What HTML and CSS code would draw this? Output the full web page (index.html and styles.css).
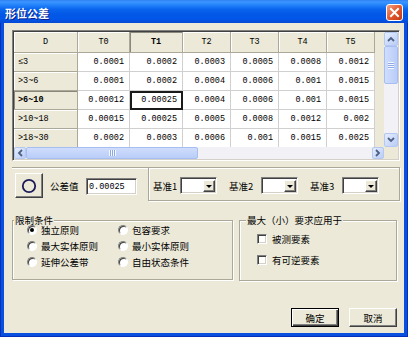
FILE: index.html
```html
<!DOCTYPE html>
<html lang="zh-CN">
<head>
<meta charset="utf-8">
<title>形位公差</title>
<link rel="stylesheet" href="styles.css">
</head>
<body>
<div class="window">
  <div class="titlebar">
    <span class="title">形位公差</span>
    <span class="close"><svg width="15" height="15" viewBox="0 0 15 15"><path d="M4 4 L11 11 M11 4 L4 11" stroke="#fff" stroke-width="2" stroke-linecap="square"/></svg></span>
  </div>
  <div class="client">
    <div class="flexgrid">
      <div class="cells">
        <div class="hd">D</div><div class="hd">T0</div><div class="hd cur">T1</div><div class="hd">T2</div><div class="hd">T3</div><div class="hd">T4</div><div class="hd">T5</div>

        <div class="rh">≤3</div><div class="v">0.0001</div><div class="v">0.0002</div><div class="v">0.0003</div><div class="v">0.0005</div><div class="v">0.0008</div><div class="v">0.0012</div>

        <div class="rh">&gt;3~6</div><div class="v">0.0001</div><div class="v">0.0002</div><div class="v">0.0004</div><div class="v">0.0006</div><div class="v">0.001</div><div class="v">0.0015</div>

        <div class="rh cur">&gt;6~10</div><div class="v">0.00012</div><div class="v sel">0.00025</div><div class="v">0.0004</div><div class="v">0.0006</div><div class="v">0.001</div><div class="v">0.0015</div>

        <div class="rh">&gt;10~18</div><div class="v">0.00015</div><div class="v">0.00025</div><div class="v">0.0005</div><div class="v">0.0008</div><div class="v">0.0012</div><div class="v">0.002</div>

        <div class="rh last">&gt;18~30</div><div class="v last">0.0002</div><div class="v last">0.0003</div><div class="v last">0.0006</div><div class="v last">0.001</div><div class="v last">0.0015</div><div class="v last">0.0025</div>
      </div>
      <div class="filler"></div>
      <div class="vscroll">
        <div class="sbtn"><svg width="8" height="6" viewBox="0 0 8 6"><polyline points="1,5 4,2 7,5" fill="none" stroke="#4D6185" stroke-width="1.8"/></svg></div>
        <div class="vtrack"><div class="vthumb"><div class="vgrip"></div></div></div>
        <div class="sbtn"><svg width="8" height="6" viewBox="0 0 8 6"><polyline points="1,1 4,4 7,1" fill="none" stroke="#4D6185" stroke-width="1.8"/></svg></div>
      </div>
      <div class="hscroll">
        <div class="sbtn hbtn"><svg width="6" height="8" viewBox="0 0 6 8"><polyline points="5,1 2,4 5,7" fill="none" stroke="#4D6185" stroke-width="1.8"/></svg></div>
        <div class="htrack"><div class="hthumb"><div class="hgrip"></div></div></div>
        <div class="sbtn hbtn"><svg width="6" height="8" viewBox="0 0 6 8"><polyline points="1,1 4,4 1,7" fill="none" stroke="#4D6185" stroke-width="1.8"/></svg></div>
      </div>
      <div class="corner"></div>
    </div>

    <div class="midrow">
      <div class="leftpart">
        <div class="circbtn"><svg width="16" height="16" viewBox="0 0 16 16"><circle cx="8" cy="8" r="6.2" fill="none" stroke="#1B1B58" stroke-width="1.8"/></svg></div>
        <span class="lbl">公差值</span>
        <div class="edit">0.00025</div>
      </div>
      <div class="panel">
        <span class="blabel first">基准1</span>
        <div class="combo"><span class="ddbtn"><span class="tri"></span></span></div>
        <span class="blabel">基准2</span>
        <div class="combo"><span class="ddbtn"><span class="tri"></span></span></div>
        <span class="blabel">基准3</span>
        <div class="combo"><span class="ddbtn"><span class="tri"></span></span></div>
      </div>
    </div>

    <div class="groups">
      <div class="group g1">
        <div class="gtitle">限制条件</div>
        <div class="radios">
          <div class="opt"><span class="radio on"></span><span>独立原则</span></div>
          <div class="opt"><span class="radio"></span><span>包容要求</span></div>
          <div class="opt"><span class="radio"></span><span>最大实体原则</span></div>
          <div class="opt"><span class="radio"></span><span>最小实体原则</span></div>
          <div class="opt"><span class="radio"></span><span>延伸公差带</span></div>
          <div class="opt"><span class="radio"></span><span>自由状态条件</span></div>
        </div>
      </div>
      <div class="group g2">
        <div class="gtitle">最大（小）要求应用于</div>
        <div class="checks">
          <div class="opt"><span class="chk"></span><span>被测要素</span></div>
          <div class="opt"><span class="chk"></span><span>有可逆要素</span></div>
        </div>
      </div>
    </div>

    <div class="buttons">
      <div class="btn default">确定</div>
      <div class="btn">取消</div>
    </div>
  </div>
</div>
</body>
</html>
```

FILE: styles.css
```css
* { box-sizing: border-box; }
html, body { margin: 0; padding: 0; }
body {
  width: 408px; height: 337px; overflow: hidden; background: #fff;
  font-family: "Noto Sans CJK SC", sans-serif; font-size: 9.5px; line-height: 12px; color: #000;
}
.window {
  width: 408px; height: 337px; background: #0A50DE;
  display: flex; flex-direction: column;
  box-shadow: inset 1px 0 #0831B9, inset -1px 0 #0831B9, inset 0 -1px #0831B9;
}
.titlebar {
  height: 23px; flex: none; display: flex; align-items: center; justify-content: space-between;
  padding: 2px 5px 0 5px;
  background: linear-gradient(#2F80F2 0, #3D95FF 2px, #2283FB 5px, #0B66EE 9px, #0358E6 14px, #0356E8 19px, #0449D4 23px);
}
.title { color: #fff; font-weight: bold; font-size: 11px; line-height: 14px; text-shadow: 1px 1px 0 #0A1E8C; }
.close {
  width: 17px; height: 17px; border: 1px solid #fff; border-radius: 3px;
  background: linear-gradient(135deg, #F3A184, #E2592F 50%, #C33A12);
  display: flex; align-items: center; justify-content: center;
}
.client { flex: 1; margin: 0 4px 4px; background: #ECE9D8; padding: 7px 4px 0 8px; }

/* grid */
.flexgrid {
  width: 388px; height: 131px; padding: 1px;
  border: 1px solid; border-color: #808080 #fff #fff #808080;
  box-shadow: inset 1px 1px #404040, inset -1px -1px #D4D0C8;
  display: grid; grid-template-columns: 361px 9px 14px; grid-template-rows: 115px 12px;
}
.cells {
  display: grid; grid-template-columns: 64px 52px 53px 48px 48px 48px 48px;
  grid-template-rows: 21px repeat(4, 19px) 18px; overflow: hidden;
  font-family: "Liberation Mono", "DejaVu Sans Mono", monospace; font-size: 8.5px; line-height: 10px;
}
.cells > div {
  display: flex; align-items: center; white-space: nowrap;
  border-right: 1px solid #D0D0D0; border-bottom: 1px solid #D0D0D0;
}
.cells > .hd, .cells > .rh {
  background: #ECE9D8; border-right-color: #ACA899; border-bottom-color: #ACA899;
  box-shadow: inset 1px 1px #fff;
}
.cells > .hd { justify-content: center; }
.cells > .rh { padding-left: 4px; }
.cells > .v { background: #fff; justify-content: flex-end; padding-right: 5px; }
.cells > .last { border-bottom: none; }
.cells > .cur { font-weight: bold; box-shadow: inset 1px 1px #8A887C; }
.cells > .sel { outline: 2px solid #1a1a1a; outline-offset: -2px; }
.filler { background: #ECE9D8; }
.corner { background: #ECE9D8; }

.vscroll { display: flex; flex-direction: column; }
.sbtn {
  flex: none; width: 14px; height: 14px; border: 1px solid #B4C8F3; border-radius: 2px;
  background: linear-gradient(135deg, #E6EEFD, #B9CCF6);
  display: flex; align-items: center; justify-content: center;
}
.vtrack { flex: 1; background: #F1F1F6; }
.vthumb {
  height: 38px; border: 1px solid #A6BEF1; border-radius: 2px;
  background: linear-gradient(90deg, #D0DDFC, #B9CDF8);
  display: flex; align-items: center; justify-content: center;
}
.vgrip { width: 6px; height: 7px; background: repeating-linear-gradient(#F4F8FF 0 1px, #8FA9E6 1px 2px); }
.hscroll { grid-column: 1 / 3; display: flex; }
.hbtn { width: 12px; height: 12px; }
.htrack { flex: 1; background: #F1F1F6; display: flex; }
.hthumb {
  width: 172px; border: 1px solid #A6BEF1; border-radius: 2px;
  background: linear-gradient(#D0DDFC, #B9CDF8);
  display: flex; align-items: center; justify-content: center;
}
.hgrip { width: 7px; height: 6px; background: repeating-linear-gradient(90deg, #F4F8FF 0 1px, #8FA9E6 1px 2px); }

/* middle row */
.midrow { display: flex; margin-top: 6px; height: 34px; }
.leftpart {
  width: 136px; flex: none; display: flex; align-items: center; padding: 2px 0 0 3px;
  border-top: 1px solid #ACA899; box-shadow: inset 0 1px #fff;
}
.circbtn {
  width: 28px; height: 25px; flex: none; margin-right: 7px; background: #ECE9D8;
  border: 1px solid; border-color: #fff #404040 #404040 #fff; box-shadow: inset -1px -1px #808080;
  display: flex; align-items: center; justify-content: center;
}
.lbl { width: 29px; margin-right: 7px; margin-top: 1px; white-space: nowrap; }
.edit {
  width: 51px; height: 17px; margin-top: 2px; background: #fff; padding-left: 2px;
  border: 1px solid; border-color: #808080 #fff #fff #808080;
  box-shadow: inset 1px 1px #404040, inset -1px -1px #D4D0C8;
  display: flex; align-items: center;
  font-family: "Liberation Mono", "DejaVu Sans Mono", monospace; font-size: 8.5px;
}
.panel {
  flex: 1; display: flex; align-items: center; padding: 3px 0 0 4px;
  border: 1px solid #ACA899; box-shadow: inset 1px 1px #fff, 1px 1px #fff;
}
.blabel { width: 32px; margin-left: 12px; white-space: nowrap; }
.blabel.first { width: 27px; margin-left: 0; }
.combo {
  width: 37px; height: 17px; background: #fff; padding: 2px 1px 1px 2px;
  border: 1px solid; border-color: #808080 #fff #fff #808080;
  box-shadow: inset 1px 1px #404040, inset -1px -1px #D4D0C8;
  display: flex; justify-content: flex-end;
}
.ddbtn {
  width: 12px; height: 100%; background: #ECE9D8;
  border: 1px solid; border-color: #fff #404040 #404040 #fff; box-shadow: inset -1px -1px #808080;
  display: flex; align-items: center; justify-content: center;
}
.tri { width: 0; height: 0; border-left: 3px solid transparent; border-right: 3px solid transparent; border-top: 3px solid #000; }

/* groups */
.groups { display: flex; gap: 6px; margin-top: 19px; margin-right: 3px; align-items: flex-start; }
.group { border: 1px solid #ACA899; box-shadow: inset 1px 1px #fff, 1px 1px #fff; }
.g1 { width: 221px; height: 60px; }
.g2 { flex: 1; height: 61px; }
.gtitle {
  width: max-content; background: #ECE9D8; padding: 0 1px;
  margin: -7px 0 -4px 1px; line-height: 12px;
}
.g2 .gtitle { margin-left: 6px; }
.radios { display: grid; grid-template-columns: 91px auto; grid-auto-rows: 16px; padding-left: 14px; }
.opt { display: flex; align-items: center; gap: 4px; white-space: nowrap; }
.radio {
  flex: none; width: 10px; height: 10px; border-radius: 50%; background: #fff;
  border: 1px solid; border-color: #808080 #fff #fff #808080; box-shadow: inset 1px 1px #404040;
}
.radio.on::after { content: ""; display: block; width: 4px; height: 4px; margin: 2px; border-radius: 50%; background: #000; }
.checks { display: flex; flex-direction: column; gap: 5px; padding-left: 17px; margin-top: 9px; }
.checks .opt { height: 16px; gap: 5px; }
.chk {
  flex: none; width: 10px; height: 10px; background: #fff;
  border: 1px solid; border-color: #808080 #fff #fff #808080;
  box-shadow: inset 1px 1px #404040, inset -1px -1px #D4D0C8;
}

/* buttons */
.buttons { display: flex; justify-content: flex-end; gap: 10px; margin-top: 27px; margin-right: 3px; }
.btn {
  width: 48px; height: 19px; background: #ECE9D8;
  border: 1px solid; border-color: #fff #404040 #404040 #fff; box-shadow: inset -1px -1px #808080;
  display: flex; align-items: center; justify-content: center;
}
.btn.default { border: 1px solid #000; box-shadow: inset 1px 1px #fff, inset -1px -1px #404040, inset -2px -2px #808080; }
```
